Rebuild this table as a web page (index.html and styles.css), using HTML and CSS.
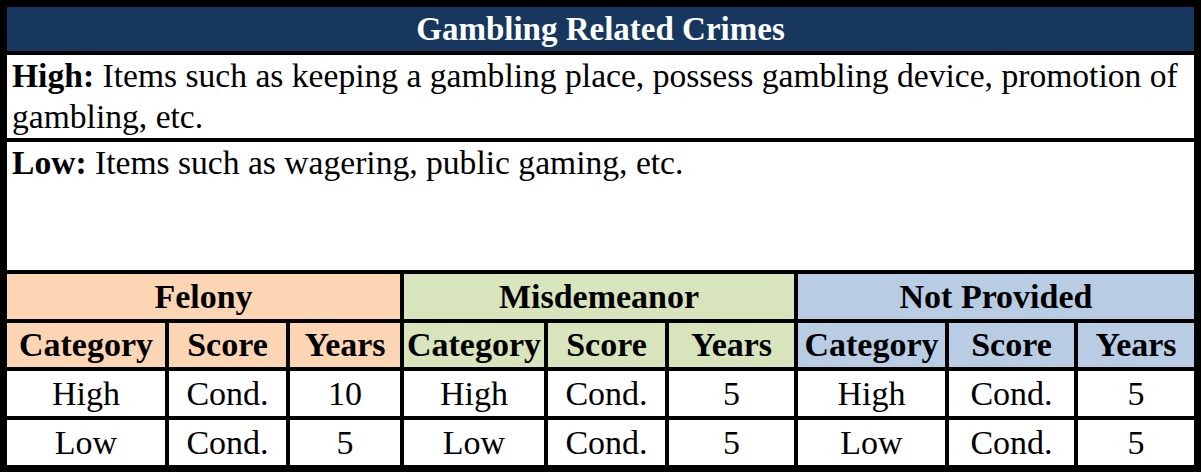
FILE: index.html
```html
<!DOCTYPE html>
<html>
<head>
<meta charset="utf-8">
<link rel="stylesheet" href="styles.css">
</head>
<body>
<div class="sheet">
  <div class="title span-all">Gambling Related Crimes</div>
  <div class="desc span-all"><p class="desc-text"><span class="label">High:</span> Items such as keeping a gambling place, possess gambling device, promotion of gambling, etc.</p></div>
  <div class="desc span-all"><p class="desc-text"><span class="label">Low:</span> Items such as wagering, public gaming, etc.</p></div>

  <div class="group felony span-3">Felony</div>
  <div class="group misd span-3">Misdemeanor</div>
  <div class="group notp span-3">Not Provided</div>

  <div class="head felony">Category</div>
  <div class="head felony">Score</div>
  <div class="head felony">Years</div>
  <div class="head misd">Category</div>
  <div class="head misd">Score</div>
  <div class="head misd">Years</div>
  <div class="head notp">Category</div>
  <div class="head notp">Score</div>
  <div class="head notp">Years</div>

  <div class="cell">High</div>
  <div class="cell">Cond.</div>
  <div class="cell">10</div>
  <div class="cell">High</div>
  <div class="cell">Cond.</div>
  <div class="cell">5</div>
  <div class="cell">High</div>
  <div class="cell">Cond.</div>
  <div class="cell">5</div>

  <div class="cell">Low</div>
  <div class="cell">Cond.</div>
  <div class="cell">5</div>
  <div class="cell">Low</div>
  <div class="cell">Cond.</div>
  <div class="cell">5</div>
  <div class="cell">Low</div>
  <div class="cell">Cond.</div>
  <div class="cell">5</div>
</div>
</body>
</html>
```
FILE: styles.css
```css
html, body {
  margin: 0;
  padding: 0;
  background: #ffffff;
}

.sheet {
  width: 1201px;
  height: 472px;
  box-sizing: border-box;
  padding: 7px;
  background: #000000;
  display: grid;
  grid-template-columns: 158px 117px 110px 140px 117px 125px 147px 125px 116px;
  grid-template-rows: 44px 83px 128px 45px 44px 45px 45px;
  gap: 4px;
  font-family: "Liberation Serif", "Times New Roman", serif;
  font-size: 34px;
  color: #000000;
}

.span-all {
  grid-column: 1 / -1;
}

.span-3 {
  grid-column: span 3;
}

.title {
  background: #17375e;
  color: #ffffff;
  font-weight: bold;
  font-size: 33px;
  display: flex;
  align-items: center;
  justify-content: center;
  line-height: 1;
}

.desc {
  background: #ffffff;
  padding: 0 0 0 5px;
}

.desc-text {
  margin: 0;
  line-height: 41px;
  font-size: 33.6px;
}

.label {
  font-weight: bold;
}

.group,
.head,
.cell {
  display: flex;
  align-items: center;
  justify-content: center;
  white-space: nowrap;
}

.group,
.head {
  font-weight: bold;
}

.cell {
  background: #ffffff;
}

.felony {
  background: #fcd5b4;
}

.misd {
  background: #d8e4bc;
}

.notp {
  background: #b8cce4;
}
```
